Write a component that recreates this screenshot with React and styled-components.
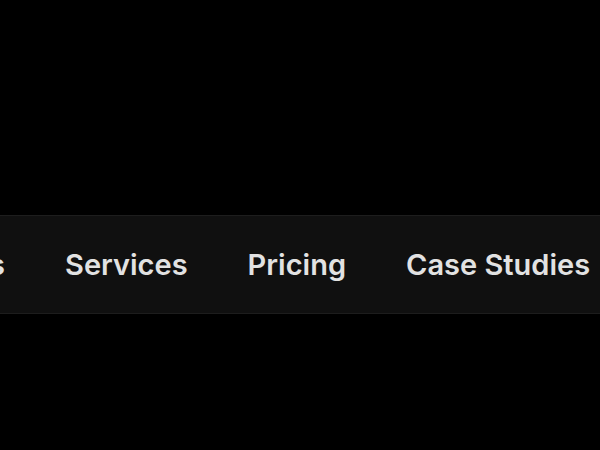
import React from 'react';
import styled, { createGlobalStyle } from 'styled-components';

const links = ['Solutions', 'Services', 'Pricing', 'Case Studies', 'Contact'];

const App = () => (
  <>
    <GlobalStyle />
    <Page>
      <NavBar>
        <LinkRow>
          {links.map(label => (
            <NavLink key={label} href="#">{label}</NavLink>
          ))}
        </LinkRow>
      </NavBar>
    </Page>
  </>
);

const GlobalStyle = createGlobalStyle`
  html, body {
    margin: 0;
    background: #000;
  }
`;

const Page = styled.div`
  width: 600px;
  height: 450px;
  padding-top: 215px;
  box-sizing: border-box;
  overflow: hidden;
  background: #000;
`;

const NavBar = styled.nav`
  height: 99px;
  box-sizing: border-box;
  border-top: 1px solid #1d1d1d;
  border-bottom: 1px solid #1d1d1d;
  background: #101010;
  display: flex;
  align-items: center;
  overflow: hidden;
`;

const LinkRow = styled.div`
  display: flex;
  gap: 60px;
  margin-left: -126px;
  white-space: nowrap;
`;

const NavLink = styled.a`
  font-family: Inter, "Noto Sans", sans-serif;
  font-size: 29px;
  font-weight: 600;
  color: #e2e2e2;
  text-decoration: none;
`;

export default App;
